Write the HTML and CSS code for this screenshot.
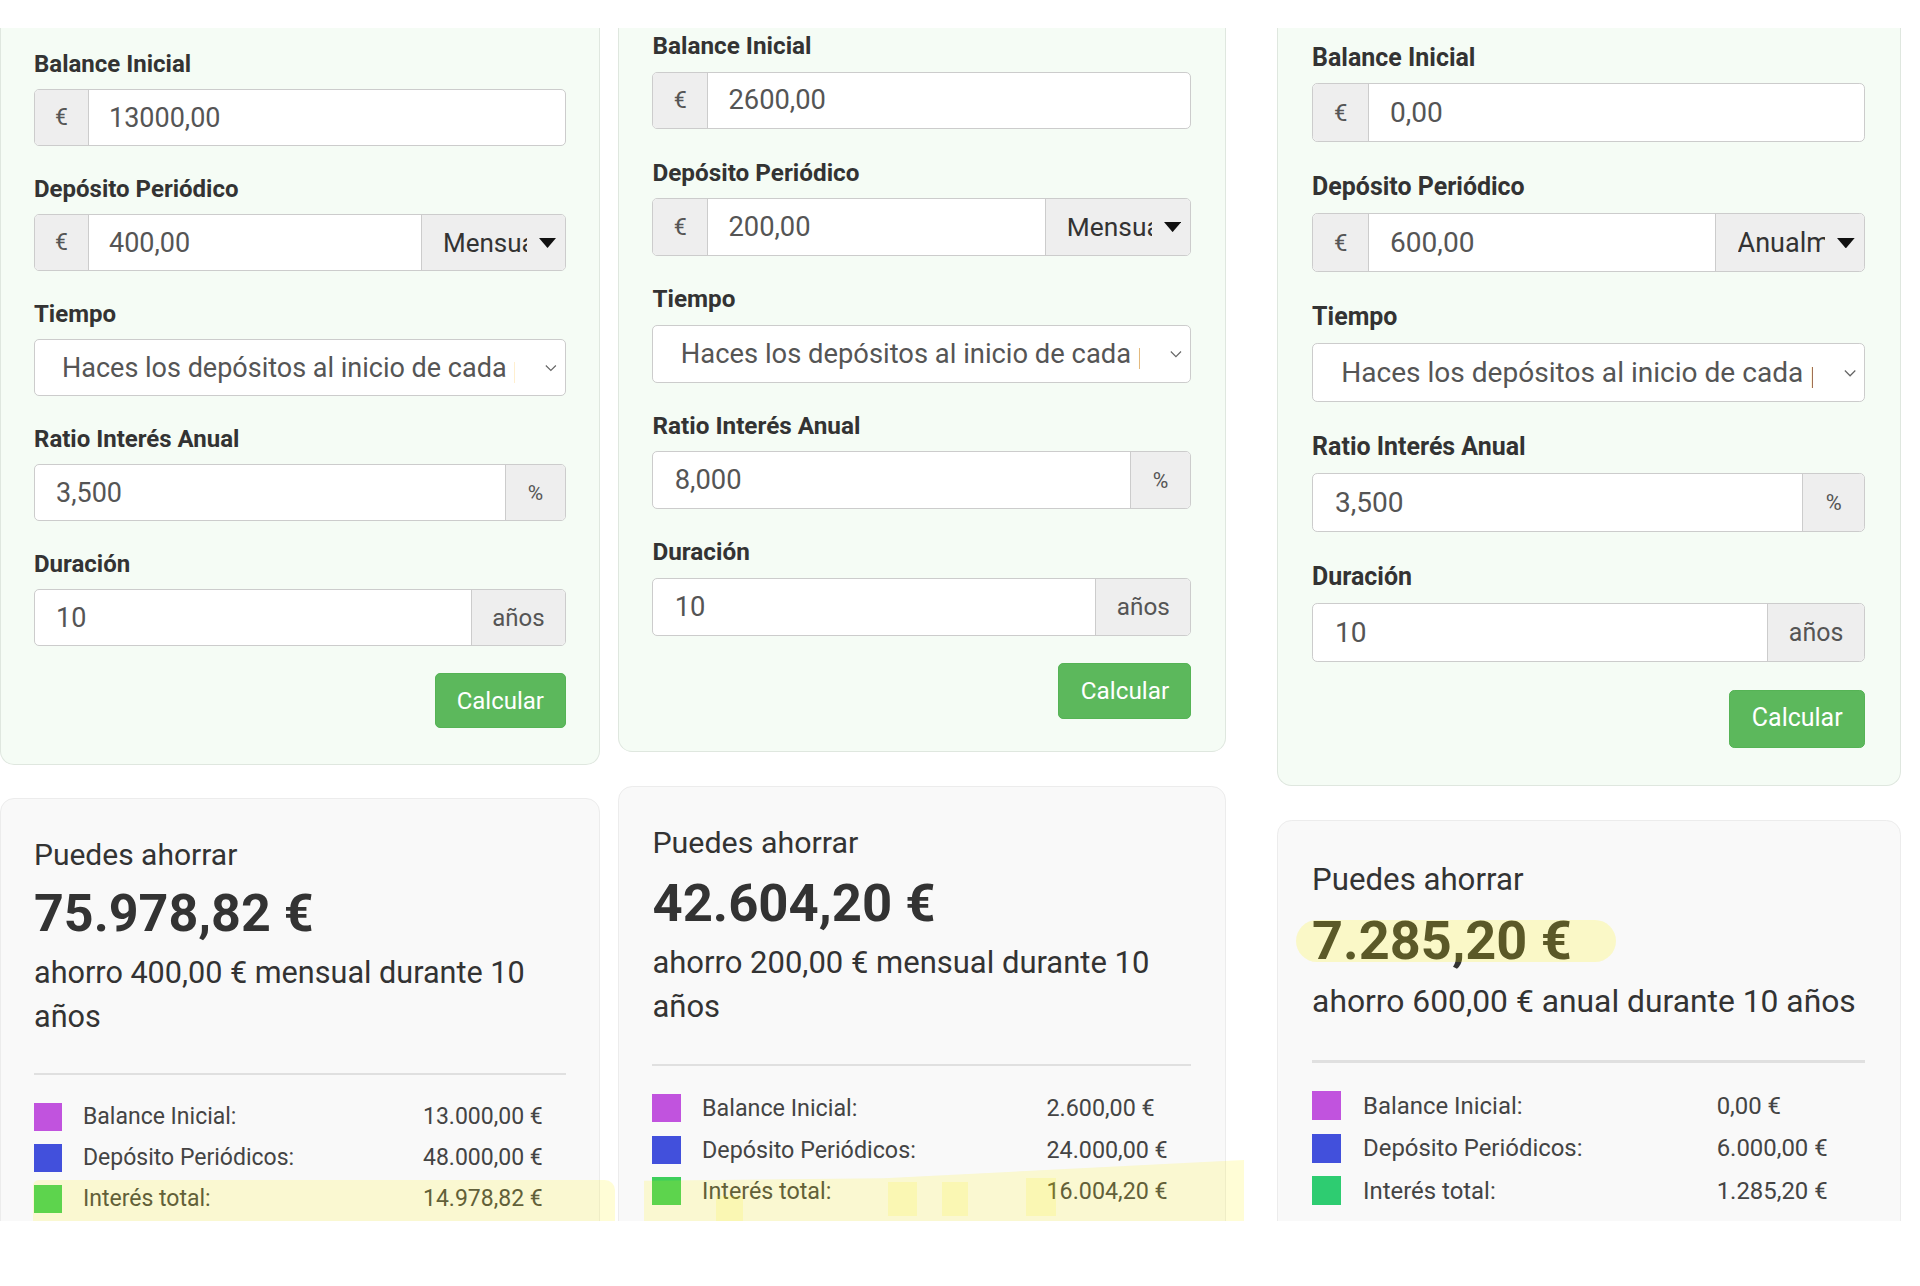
FILE: index.html
```html
<!DOCTYPE html>
<html lang="es">
<head>
<meta charset="utf-8">
<title>Calculadora de ahorro</title>
<link rel="stylesheet" href="styles.css">
</head>
<body>
<div class="page">
  <div class="sheet">

    <div class="col col-1">
      <form class="card form-card">
        <div class="field">
          <label class="lbl">Balance Inicial</label>
          <div class="igroup"><span class="addon addon-start">€</span><span class="val">13000,00</span></div>
        </div>
        <div class="field">
          <label class="lbl">Depósito Periódico</label>
          <div class="igroup"><span class="addon addon-start">€</span><span class="val">400,00</span>
            <span class="sel-addon"><span class="sel-clip">Mensual</span><svg class="tri" viewBox="0 0 17 10"><polygon points="0,0 17,0 8.5,10"/></svg></span></div>
        </div>
        <div class="field">
          <label class="lbl">Tiempo</label>
          <div class="igroup select"><span class="select-clip">Haces los depósitos al inicio de cada periodo</span><svg class="chev" viewBox="0 0 14 8"><polyline points="1,1 7,7 13,1"/></svg></div>
        </div>
        <div class="field">
          <label class="lbl">Ratio Interés Anual</label>
          <div class="igroup"><span class="val val-solo">3,500</span><span class="addon addon-end addon-pct">%</span></div>
        </div>
        <div class="field">
          <label class="lbl">Duración</label>
          <div class="igroup"><span class="val val-solo">10</span><span class="addon addon-end addon-years">años</span></div>
        </div>
        <div class="actions"><button type="button" class="btn">Calcular</button></div>
      </form>
      <section class="card result-card">
        <div class="save-title">Puedes ahorrar</div>
        <div class="save-amount">75.978,82 €</div>
        <div class="save-desc">ahorro 400,00 € mensual durante 10 años</div>
        <hr class="divider">
        <div class="legend">
          <span class="sw sw-purple"></span><span class="lg-label">Balance Inicial:</span><span class="lg-val">13.000,00 €</span>
          <span class="sw sw-blue"></span><span class="lg-label">Depósito Periódicos:</span><span class="lg-val">48.000,00 €</span>
          <span class="sw sw-green"></span><span class="lg-label">Interés total:</span><span class="lg-val">14.978,82 €</span>
        </div>
      </section>
    </div>

    <div class="col col-2">
      <form class="card form-card">
        <div class="field">
          <label class="lbl">Balance Inicial</label>
          <div class="igroup"><span class="addon addon-start">€</span><span class="val">2600,00</span></div>
        </div>
        <div class="field">
          <label class="lbl">Depósito Periódico</label>
          <div class="igroup"><span class="addon addon-start">€</span><span class="val">200,00</span>
            <span class="sel-addon"><span class="sel-clip">Mensual</span><svg class="tri" viewBox="0 0 17 10"><polygon points="0,0 17,0 8.5,10"/></svg></span></div>
        </div>
        <div class="field">
          <label class="lbl">Tiempo</label>
          <div class="igroup select"><span class="select-clip">Haces los depósitos al inicio de cada periodo</span><svg class="chev" viewBox="0 0 14 8"><polyline points="1,1 7,7 13,1"/></svg></div>
        </div>
        <div class="field">
          <label class="lbl">Ratio Interés Anual</label>
          <div class="igroup"><span class="val val-solo">8,000</span><span class="addon addon-end addon-pct">%</span></div>
        </div>
        <div class="field">
          <label class="lbl">Duración</label>
          <div class="igroup"><span class="val val-solo">10</span><span class="addon addon-end addon-years">años</span></div>
        </div>
        <div class="actions"><button type="button" class="btn">Calcular</button></div>
      </form>
      <section class="card result-card">
        <div class="save-title">Puedes ahorrar</div>
        <div class="save-amount">42.604,20 €</div>
        <div class="save-desc">ahorro 200,00 € mensual durante 10 años</div>
        <hr class="divider">
        <div class="legend">
          <span class="sw sw-purple"></span><span class="lg-label">Balance Inicial:</span><span class="lg-val">2.600,00 €</span>
          <span class="sw sw-blue"></span><span class="lg-label">Depósito Periódicos:</span><span class="lg-val">24.000,00 €</span>
          <span class="sw sw-green"></span><span class="lg-label">Interés total:</span><span class="lg-val">16.004,20 €</span>
        </div>
      </section>
    </div>

    <div class="col col-3">
      <form class="card form-card">
        <div class="field">
          <label class="lbl">Balance Inicial</label>
          <div class="igroup"><span class="addon addon-start">€</span><span class="val">0,00</span></div>
        </div>
        <div class="field">
          <label class="lbl">Depósito Periódico</label>
          <div class="igroup"><span class="addon addon-start">€</span><span class="val">600,00</span>
            <span class="sel-addon"><span class="sel-clip">Anualmente</span><svg class="tri" viewBox="0 0 17 10"><polygon points="0,0 17,0 8.5,10"/></svg></span></div>
        </div>
        <div class="field">
          <label class="lbl">Tiempo</label>
          <div class="igroup select"><span class="select-clip">Haces los depósitos al inicio de cada periodo</span><svg class="chev" viewBox="0 0 14 8"><polyline points="1,1 7,7 13,1"/></svg></div>
        </div>
        <div class="field">
          <label class="lbl">Ratio Interés Anual</label>
          <div class="igroup"><span class="val val-solo">3,500</span><span class="addon addon-end addon-pct">%</span></div>
        </div>
        <div class="field">
          <label class="lbl">Duración</label>
          <div class="igroup"><span class="val val-solo">10</span><span class="addon addon-end addon-years">años</span></div>
        </div>
        <div class="actions"><button type="button" class="btn">Calcular</button></div>
      </form>
      <section class="card result-card">
        <div class="save-title">Puedes ahorrar</div>
        <div class="save-amount">7.285,20 €</div>
        <div class="save-desc">ahorro 600,00 € anual durante 10 años</div>
        <hr class="divider">
        <div class="legend">
          <span class="sw sw-purple"></span><span class="lg-label">Balance Inicial:</span><span class="lg-val">0,00 €</span>
          <span class="sw sw-blue"></span><span class="lg-label">Depósito Periódicos:</span><span class="lg-val">6.000,00 €</span>
          <span class="sw sw-teal"></span><span class="lg-label">Interés total:</span><span class="lg-val">1.285,20 €</span>
        </div>
      </section>
    </div>

  </div>

  <div class="hl hl-band-1"></div>
  <div class="hl hl-band-2"></div>
  <div class="hl hl-dab hl-dab-1"></div>
  <div class="hl hl-dab hl-dab-2"></div>
  <div class="hl hl-dab hl-dab-3"></div>
  <div class="hl hl-dab hl-dab-4"></div>
  <div class="hl hl-amount"></div>
</div>
</body>
</html>
```
FILE: styles.css
```css
* { box-sizing: border-box; }

html, body {
  margin: 0;
  background: #ffffff;
}

body {
  font-family: Roboto, "Liberation Sans", Arial, sans-serif;
  color: #333333;
}

.page {
  position: relative;
  width: 1920px;
  height: 1286px;
  padding-top: 28px;
  overflow: hidden;
}

.sheet {
  display: flex;
  align-items: flex-start;
  height: 1193px;
  overflow: hidden;
}

.col {
  width: 600px;
  flex: 0 0 600px;
}

.col-2 {
  zoom: 1.013;
  margin-left: 17.8px;
}

.col-3 {
  zoom: 1.04;
  margin-left: 49px;
}

/* ---------- form card ---------- */
.form-card {
  display: block;
  margin: 0;
  background: #f5fcf5;
  border: 1px solid #dfe7df;
  border-top: none;
  border-radius: 0 0 14px 14px;
  padding: 21px 33px 36px;
}

.col-2 .form-card { padding-top: 3px; padding-bottom: 32px; }
.col-3 .form-card { padding-top: 13px; }

.field + .field { margin-top: 28px; }

.lbl {
  display: block;
  font-size: 24px;
  font-weight: 700;
  line-height: 30px;
  color: #333333;
  margin-bottom: 10px;
}

.igroup {
  display: flex;
  align-items: stretch;
  height: 57px;
  border: 1px solid #cccccc;
  border-radius: 5px;
  background: #ffffff;
  overflow: hidden;
}

.addon {
  display: flex;
  align-items: center;
  justify-content: center;
  background: #eeeeee;
  color: #555555;
  font-size: 23px;
  flex: 0 0 auto;
}

.addon-start {
  width: 54px;
  border-right: 1px solid #cccccc;
}

.addon-end { border-left: 1px solid #cccccc; }
.addon-pct { width: 60px; font-size: 21px; }
.addon-years { width: 94px; font-size: 24px; }

.val {
  flex: 1 1 auto;
  display: flex;
  align-items: center;
  padding-left: 20px;
  font-size: 27px;
  color: #555555;
  white-space: nowrap;
}

.val-solo { padding-left: 21px; }

.sel-addon {
  flex: 0 0 144px;
  display: flex;
  align-items: center;
  background: #eeeeee;
  border-left: 1px solid #cccccc;
  padding-left: 21px;
  color: #333333;
  font-size: 26px;
}

.sel-clip {
  width: 84px;
  overflow: hidden;
  white-space: nowrap;
}

.tri {
  width: 17px;
  height: 10px;
  margin-left: 12px;
  fill: #111111;
}

.select {
  align-items: center;
  padding-left: 27px;
}

.select-clip {
  flex: 1 1 auto;
  overflow: hidden;
  white-space: nowrap;
  font-size: 27px;
  color: #555555;
  margin-right: 30px;
}

.chev {
  width: 14px;
  height: 8px;
  margin-right: 8px;
  fill: none;
  stroke: #666666;
  stroke-width: 1.4;
}

.actions {
  display: flex;
  justify-content: flex-end;
  margin-top: 27px;
}

.btn {
  height: 55px;
  padding: 0 21px;
  border: 1px solid #55b355;
  border-radius: 5px;
  background: #5cb85c;
  color: #ffffff;
  font-family: Roboto, "Liberation Sans", Arial, sans-serif;
  font-size: 24px;
  line-height: 1;
}

/* ---------- result card ---------- */
.result-card {
  margin-top: 33px;
  background: #f9f9f9;
  border: 1px solid #ececec;
  border-radius: 14px;
  padding: 38px 33px 40px;
}

.save-title {
  font-size: 30px;
  line-height: 36px;
  color: #333333;
}

.save-amount {
  margin-top: 9px;
  font-size: 52px;
  font-weight: 700;
  line-height: 64px;
  color: #333333;
}

.save-desc {
  margin-top: 5px;
  font-size: 30.6px;
  line-height: 44px;
  color: #333333;
}

.divider {
  border: 0;
  height: 2px;
  background: #e0e0e0;
  margin: 34px 0 21px;
}

.legend {
  display: grid;
  grid-template-columns: 28px 361px 1fr;
  grid-auto-rows: 41px;
  align-items: center;
  font-size: 23px;
  color: #444444;
}

.sw {
  width: 28px;
  height: 28px;
}

.sw-purple { background: #c153de; }
.sw-blue { background: #4250dc; }
.sw-green { background: #3ecf5c; }
.sw-teal { background: #2ecc71; }

.lg-label { padding-left: 21px; }

/* ---------- highlighter marks (overlay) ---------- */
.hl {
  position: absolute;
  background: rgba(255, 244, 0, 0.16);
  pointer-events: none;
}

.hl-band-1 {
  left: 33px;
  top: 1180px;
  width: 582px;
  height: 41px;
  border-radius: 6px 10px 0 0;
}

.hl-band-2 {
  left: 644px;
  top: 1160px;
  width: 600px;
  height: 61px;
  clip-path: polygon(0 34%, 40% 30%, 100% 0, 100% 100%, 0 100%);
}

.hl-dab { background: rgba(255, 244, 0, 0.14); }
.hl-dab-1 { left: 716px; top: 1196px; width: 27px; height: 25px; }
.hl-dab-2 { left: 888px; top: 1182px; width: 29px; height: 34px; }
.hl-dab-3 { left: 942px; top: 1182px; width: 26px; height: 34px; }
.hl-dab-4 { left: 1026px; top: 1178px; width: 30px; height: 38px; }

.hl-amount {
  left: 1296px;
  top: 920px;
  width: 320px;
  height: 42px;
  border-radius: 21px;
  background: rgba(255, 244, 0, 0.2);
}
```
